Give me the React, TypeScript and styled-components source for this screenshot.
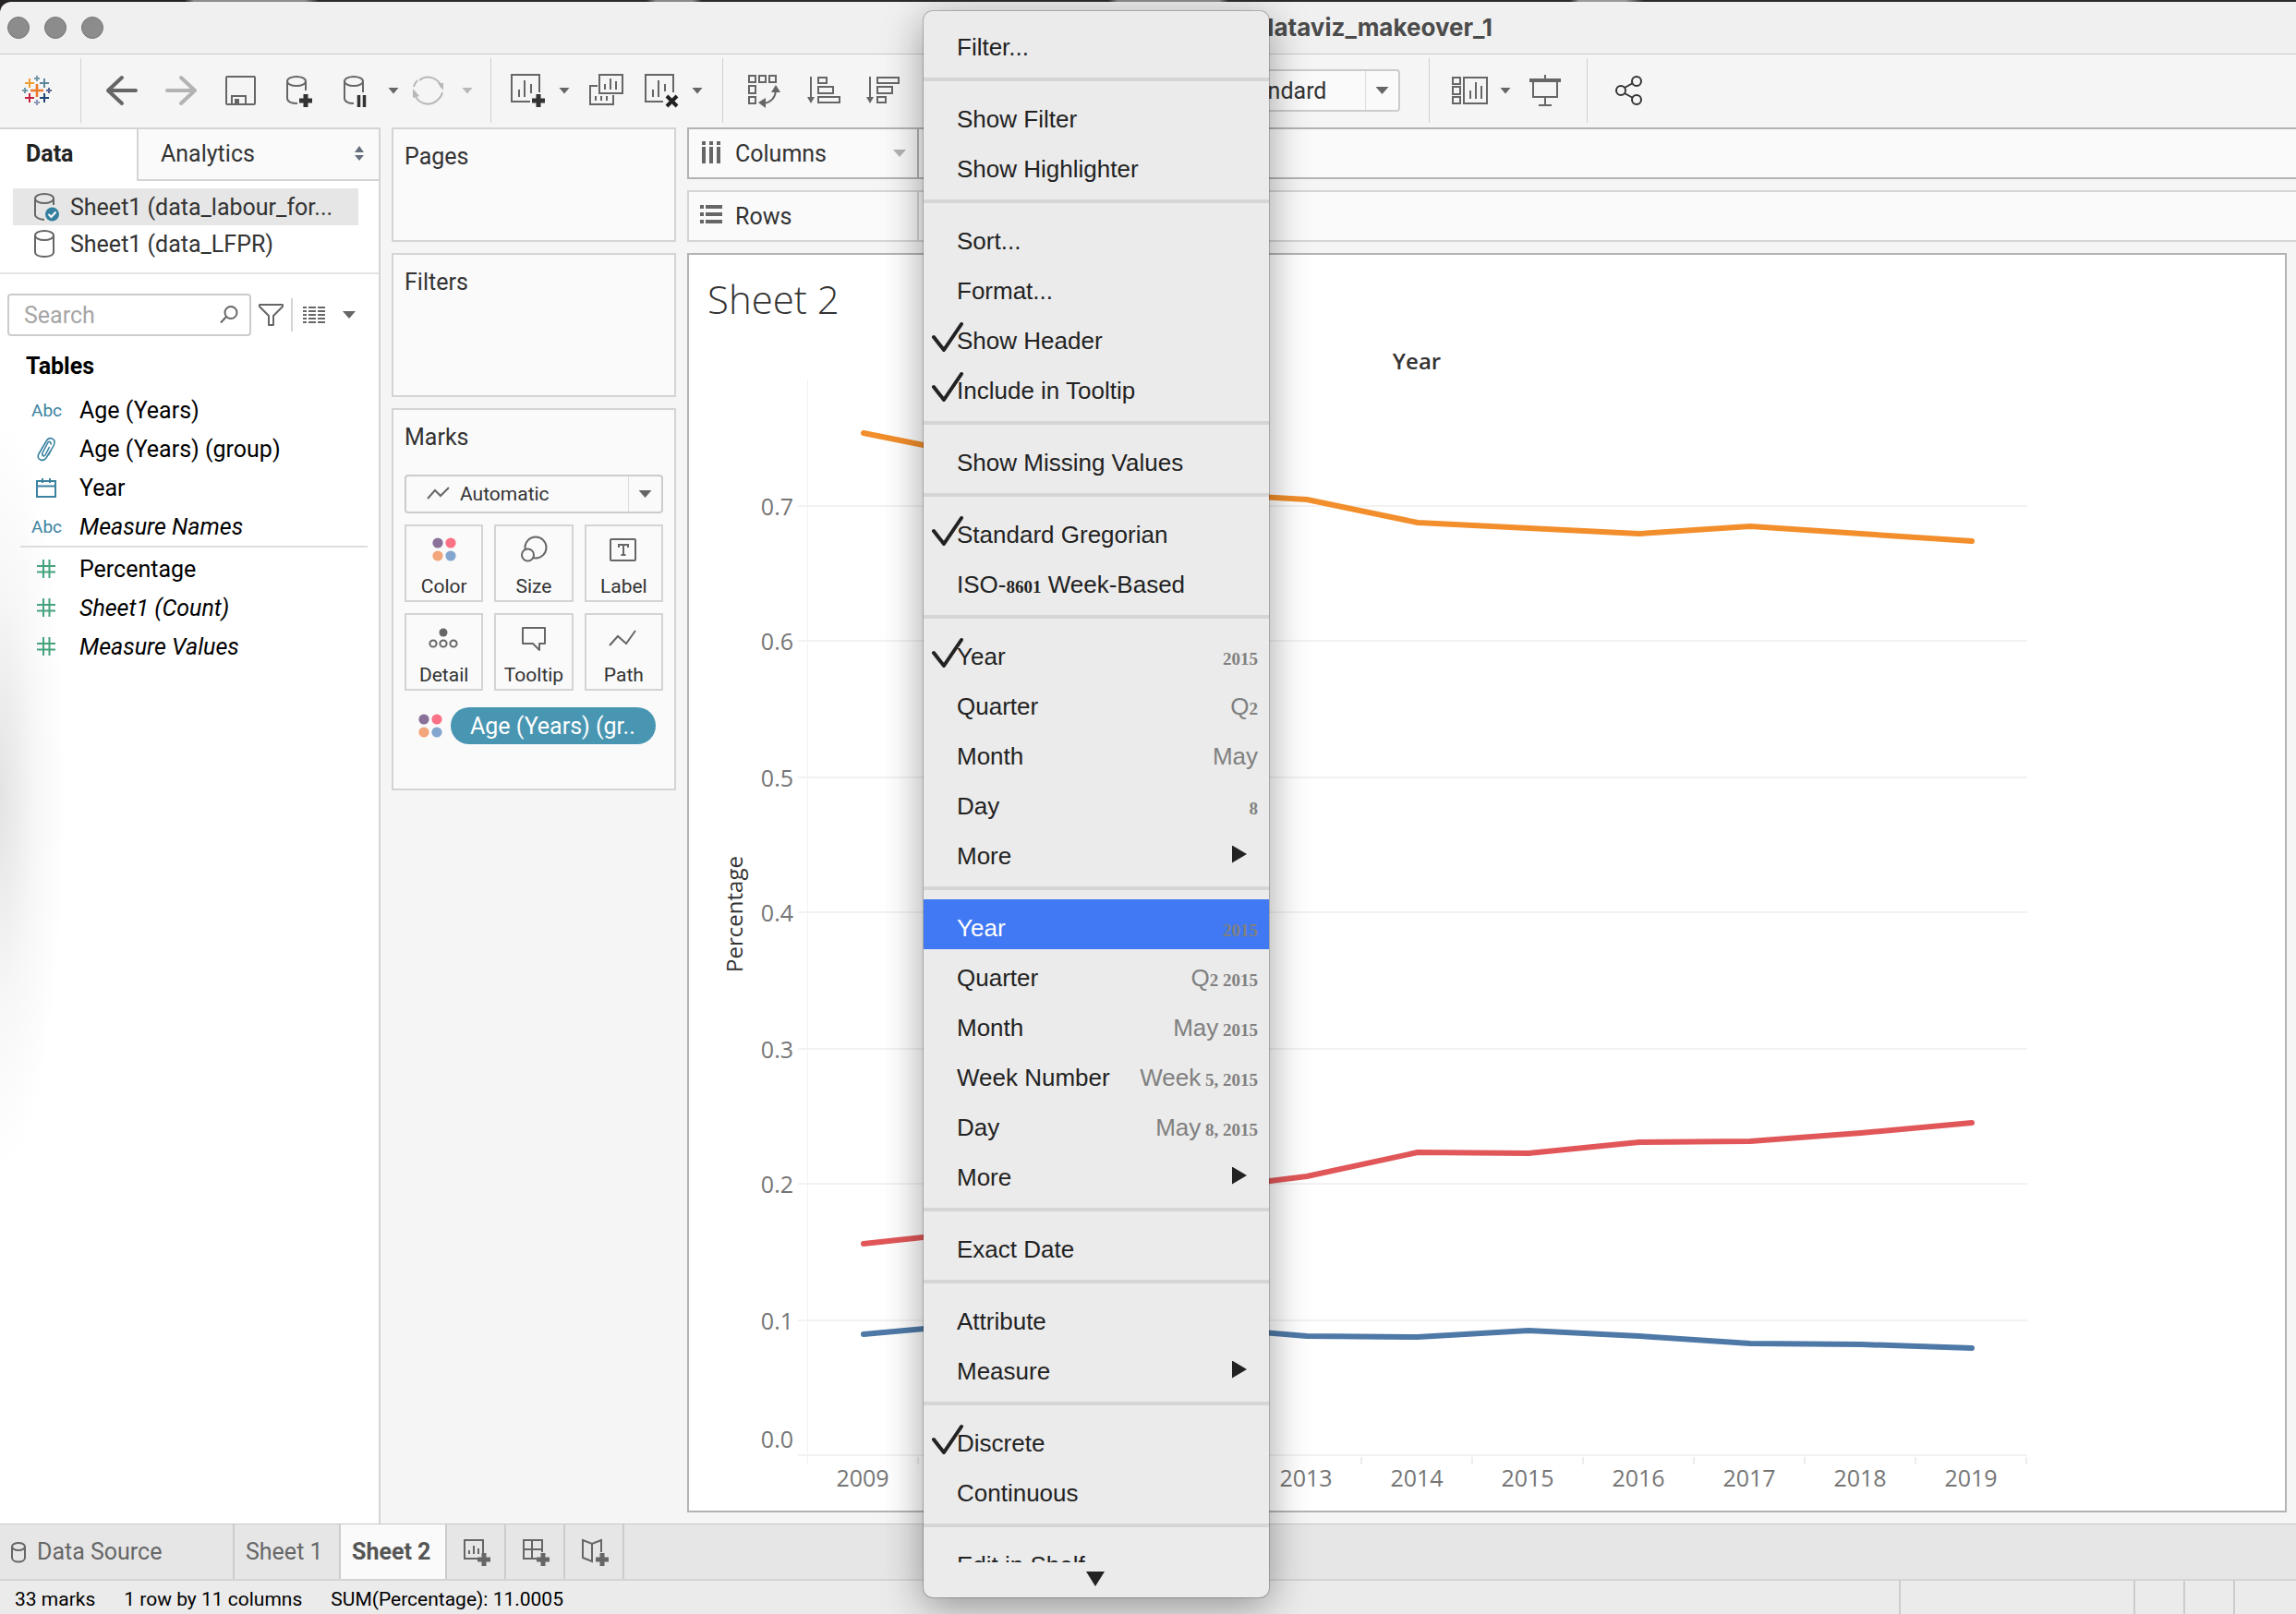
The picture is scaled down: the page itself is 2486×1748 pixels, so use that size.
import React from "react";
import styled, { createGlobalStyle, css } from "styled-components";

const UI = `Roboto, "Liberation Sans", sans-serif`;
const CHART = `"Open Sans", "Noto Sans", sans-serif`;
const MENU = `"Liberation Sans", Arial, sans-serif`;

const GlobalStyle = createGlobalStyle`
  *, *::before, *::after { box-sizing: border-box; }
  body {
    margin: 0;
    font-family: ${UI};
    font-size: 25px;
    color: #333;
    background: linear-gradient(90deg, #262424 0 200px, #8e8c8c 210px 330px, #2b2929 345px 700px, #8a8888 710px 750px, #2b2929 760px 1200px, #858383 1210px 1320px, #2b2929 1330px 1700px, #9a9898 1710px 1760px, #2b2929 1780px);
  }
  button, input, select { font: inherit; color: inherit; margin: 0; }
  button { border: 0; padding: 0; background: none; }
  ul { list-style: none; margin: 0; padding: 0; }
  h1, h2, h3 { margin: 0; font-size: inherit; }
`;

/* ---------- window frame ---------- */

const Window = styled.div`
  position: relative;
  display: flex;
  flex-direction: column;
  height: 100vh;
  border-top: 2px solid transparent;
  overflow: hidden;
`;

const TitleBar = styled.header`
  display: flex;
  justify-content: space-between;
  align-items: center;
  flex: none;
  height: 57px;
  padding: 0 35% 0 8px;
  border-top-left-radius: 12px;
  border-bottom: 1px solid #c9c9c9;
  background: #f0f0f0;
`;

const Lights = styled.div`
  display: flex;
  gap: 16px;
`;

const Light = styled.button`
  width: 24px;
  height: 24px;
  border: 1px solid #757575;
  border-radius: 50%;
  background: #8c8c8c;
`;

const WindowTitle = styled.h1`
  font-family: Inter, ${UI};
  font-size: 26px;
  font-weight: 700;
  line-height: 32px;
  color: #4b4b4b;
`;

/* ---------- toolbar ---------- */

const Toolbar = styled.nav`
  display: flex;
  align-items: center;
  flex: none;
  height: 79px;
  padding-bottom: 1px;
  background: #f5f5f5;
`;

const ToolGroup = styled.div<{ $gap?: number; $start?: number; $end?: number }>`
  display: flex;
  align-items: center;
  gap: ${(p) => p.$gap ?? 24}px;
  padding: 0 ${(p) => p.$end ?? 24}px 0 ${(p) => p.$start ?? 24}px;
`;

const Split = styled.div`
  display: flex;
  align-items: center;
  gap: 12px;
`;

const ToolButton = styled.button`
  display: block;
  width: 40px;
  height: 40px;
  svg { display: block; }
`;

const ToolRule = styled.span`
  flex: none;
  width: 1px;
  height: 70px;
  background: #d0d0d0;
`;

const HiddenTools = styled.span`
  width: 297px;
`;

const CaretButton = styled.button<{ $tone?: string }>`
  width: 12px;
  height: 7px;
  background: ${(p) => p.$tone ?? "#666"};
  clip-path: polygon(0 0, 100% 0, 50% 100%);
`;

const Caret = styled.span<{ $tone?: string }>`
  display: block;
  width: 14px;
  height: 8px;
  background: ${(p) => p.$tone ?? "#666"};
  clip-path: polygon(0 0, 100% 0, 50% 100%);
`;

const Picker = styled.label<{ $width: string; $height: number; $inset: number; $size: number }>`
  display: grid;
  grid-template-columns: 1fr 36px;
  align-items: center;
  width: ${(p) => p.$width};
  height: ${(p) => p.$height}px;
  border: 2px solid #ccc;
  border-radius: 4px;
  background: #fafafa;
  font-size: ${(p) => p.$size}px;
  > * { grid-row: 1; }
  select {
    grid-column: 1 / 3;
    width: 100%;
    height: 100%;
    padding: 0 0 0 ${(p) => p.$inset}px;
    border: 0;
    appearance: none;
    background: none;
  }
  svg { grid-column: 1; margin-left: 22px; }
`;

const PickerArrow = styled.span`
  grid-column: 2;
  display: grid;
  place-items: center;
  height: 100%;
  border-left: 1px solid #ddd;
  pointer-events: none;
`;

/* ---------- workspace ---------- */

const Workspace = styled.main`
  display: flex;
  flex: 1;
  min-height: 0;
  background: #f5f5f5;
`;

const DataPane = styled.aside`
  flex: none;
  width: 412px;
  border-top: 2px solid #d4d4d4;
  border-right: 2px solid #d4d4d4;
  background: radial-gradient(ellipse 72px 410px at 0 720px, rgba(0, 0, 0, 0.11), rgba(0, 0, 0, 0.03) 55%, transparent) #fff;
`;

const PaneTabs = styled.div`
  display: grid;
  grid-template-columns: 148px 1fr;
  height: 56px;
`;

const PaneTab = styled.button<{ $active?: boolean }>`
  display: flex;
  align-items: center;
  justify-content: space-between;
  padding: 0 15px 4px 28px;
  text-align: left;
  ${(p) =>
    p.$active
      ? css`
          font-weight: 700;
          color: #222;
        `
      : css`
          padding: 0 15px 2px 24px;
          border-left: 2px solid #d4d4d4;
          border-bottom: 2px solid #d4d4d4;
          background: #fafafa;
        `}
`;

const Sources = styled.ul`
  padding: 8px 22px 11px 14px;
  border-bottom: 2px solid #e5e5e5;
`;

const Source = styled.li<{ $selected?: boolean }>`
  background: ${(p) => (p.$selected ? "#e6e6e6" : "none")};
  button {
    display: flex;
    align-items: center;
    gap: 15px;
    width: 100%;
    height: 40px;
    padding-left: 23px;
    white-space: nowrap;
  }
`;

const SearchRow = styled.div`
  display: flex;
  align-items: center;
  padding: 21px 8px 0 8px;
`;

const SearchBox = styled.label`
  display: flex;
  align-items: center;
  width: 264px;
  height: 46px;
  padding: 0 12px 0 16px;
  border: 2px solid #ccc;
  border-radius: 4px;
  background: #fff;
  input {
    flex: 1;
    min-width: 0;
    padding: 0;
    border: 0;
    outline: 0;
    background: none;
  }
  input::placeholder { color: #a6a6a6; opacity: 1; }
`;

const SearchTools = styled.div`
  display: flex;
  align-items: center;
  gap: 8px;
  margin-left: 8px;
  button { display: block; }
  svg { display: block; }
`;

const SmallRule = styled.span`
  width: 2px;
  height: 36px;
  background: #d4d4d4;
`;

const ListView = styled.button`
  padding: 0 11px 0 3px;
`;

const FieldsTitle = styled.h2`
  padding: 17px 0 0 28px;
  line-height: 32px;
  font-weight: 700;
  color: #000;
`;

const FieldList = styled.ul`
  margin: 10px 12px 0 22px;
  color: #000;
  & + & {
    margin-top: 0;
    padding-top: 2px;
    border-top: 2px solid #ddd;
  }
`;

const Field = styled.li<{ $italic?: boolean }>`
  display: grid;
  grid-template-columns: 56px 1fr;
  align-items: center;
  height: 42px;
  padding-left: 8px;
  font-style: ${(p) => (p.$italic ? "italic" : "normal")};
  svg { margin-left: 9px; }
`;

const Abc = styled.span`
  padding-left: 4px;
  font-size: 19px;
  font-style: normal;
  color: #3b82a0;
`;

/* ---------- cards ---------- */

const Cards = styled.section`
  display: flex;
  flex-direction: column;
  flex: none;
  gap: 12px;
  width: 308px;
  margin: 0 12px;
`;

const Card = styled.section<{ $height: number }>`
  min-height: ${(p) => p.$height}px;
  padding: 14px 12px;
  border: 2px solid #d4d4d4;
  background: #fafafa;
`;

const CardTitle = styled.h2`
  font-weight: 400;
  line-height: 32px;
`;

const MarksBody = styled.div`
  display: grid;
  gap: 12px;
  padding-top: 24px;
`;

const MarkGrid = styled.div`
  display: grid;
  grid-template-columns: repeat(3, 1fr);
  gap: 12px;
`;

const MarkButton = styled.button`
  display: flex;
  flex-direction: column;
  align-items: center;
  justify-content: space-between;
  height: 84px;
  padding: 10px 0 2px;
  border: 2px solid #d4d4d4;
  font-size: 21px;
  line-height: 26px;
`;

const PillRow = styled.div`
  display: flex;
  align-items: center;
  gap: 9px;
  padding: 6px 8px 0 15px;
`;

const Pill = styled.button`
  flex: 1;
  height: 40px;
  padding: 0 21px;
  border-radius: 20px;
  background: #4996b2;
  color: #fff;
  text-align: left;
  white-space: nowrap;
`;

/* ---------- shelves and sheet ---------- */

const Canvas = styled.section`
  display: flex;
  flex-direction: column;
  flex: 1;
  gap: 12px;
  min-width: 0;
  padding-bottom: 12px;
`;

const Shelf = styled.div<{ $active?: boolean }>`
  --edge: ${(p) => (p.$active ? "#b3b3b3" : "#d4d4d4")};
  display: flex;
  flex: none;
  height: 56px;
  border: 2px solid var(--edge);
  border-right: 0;
  background: #fafafa;
`;

const ShelfName = styled.div`
  display: flex;
  align-items: center;
  gap: 14px;
  width: 249px;
  padding: 0 12px;
  border-right: 2px solid var(--edge);
  span:last-child { margin-left: auto; }
`;

const Sheet = styled.article`
  flex: 1;
  min-height: 0;
  margin-right: 10px;
  border: 2px solid #b3b3b3;
  background: #fff;
  overflow: hidden;
`;

const SheetTitle = styled.h2`
  height: 100px;
  padding: 18px 0 0 20px;
  font-family: ${CHART};
  font-size: 42px;
  font-weight: 300;
  line-height: 60px;
`;

const Chart = styled.svg`
  display: block;
  width: 1460px;
  height: 1260px;
  font-family: ${CHART};
  font-size: 25px;
`;

/* ---------- footer ---------- */

const TabBar = styled.nav`
  display: flex;
  flex: none;
  height: 62px;
  border-top: 1px solid #c8c8c8;
  border-bottom: 2px solid #d4d4d4;
  background: #e6e6e6;
`;

const SheetTab = styled.button<{ $active?: boolean; $wide?: boolean }>`
  display: flex;
  align-items: center;
  gap: 12px;
  min-width: ${(p) => (p.$wide ? 254 : 115)}px;
  padding: 0 12px;
  border-right: 2px solid #ccc;
  color: #666;
  white-space: nowrap;
  ${(p) =>
    p.$active &&
    css`
      background: #fafafa;
      color: #555;
      font-weight: 700;
    `}
`;

const NewTab = styled.button`
  display: grid;
  place-items: center;
  width: 64px;
  border-right: 2px solid #ccc;
`;

const StatusBar = styled.footer`
  display: flex;
  flex: none;
  gap: 31px;
  height: 36px;
  padding-left: 16px;
  background: #ebebeb;
  color: #000;
  font-size: 21px;
  line-height: 40px;
  white-space: nowrap;
`;

const StatusCells = styled.div`
  display: grid;
  grid-template-columns: 254px 54px 54px 68px;
  margin-left: auto;
  span { border-left: 2px solid #ccc; }
`;

/* ---------- context menu ---------- */

const Menu = styled.div`
  position: absolute;
  top: 10px;
  left: 1000px;
  display: flex;
  flex-direction: column;
  width: 374px;
  max-height: calc(100vh - 30px);
  border-radius: 10px;
  background: #ebebeb;
  box-shadow: 0 0 0 1px rgba(0, 0, 0, 0.2), 0 10px 44px rgba(0, 0, 0, 0.38);
  font-family: ${MENU};
  font-size: 26px;
  color: #222;
`;

const MenuScroll = styled.div`
  flex: 1;
  min-height: 0;
  padding-top: 8px;
  overflow: hidden;
`;

const MenuSection = styled.ul`
  & + & {
    margin-top: 10px;
    padding-top: 10px;
    border-top: 4px solid #d5d5d5;
  }
`;

const MenuButton = styled.button<{ $hot?: boolean }>`
  display: flex;
  align-items: center;
  justify-content: space-between;
  width: 100%;
  height: 54px;
  padding: 8px 12px 0 36px;
  background: ${(p) => (p.$hot ? "#4178f3" : "none")};
  color: ${(p) => (p.$hot ? "#fff" : "#222")};
  white-space: nowrap;
`;

const CheckSlot = styled.span`
  position: absolute;
  left: 8px;
  padding-bottom: 4px;
  svg { display: block; }
`;

const Hint = styled.span`
  color: #808080;
`;

const SmallDigits = styled.span`
  font-family: "Liberation Serif", "Times New Roman", serif;
  font-size: 19px;
  font-weight: 700;
`;

const SubArrow = styled.span`
  width: 16px;
  height: 19px;
  margin: 0 12px 4px 0;
  background: #222;
  clip-path: polygon(0 0, 100% 50%, 0 100%);
`;

const ScrollDown = styled.button`
  display: grid;
  flex: none;
  justify-items: center;
  align-content: start;
  height: 38px;
  padding: 10px 2px 0 0;
  span {
    width: 20px;
    height: 16px;
    background: #222;
    clip-path: polygon(0 0, 100% 0, 50% 100%);
  }
`;

/* ---------- icons ---------- */

const Icon = ({ children, w = 40, h = 40, stroke = "#666", sw = 2 }: { children: React.ReactNode; w?: number; h?: number; stroke?: string; sw?: number }) => (
  <svg width={w} height={h} viewBox={`0 0 ${w} ${h}`} fill="none" stroke={stroke} strokeWidth={sw} aria-hidden="true" overflow="visible">
    {children}
  </svg>
);

const Logo = () => (
  <Icon>
    <path d="M20 13V27M13 20H27" stroke="#ec7a2c" strokeWidth="2.6" />
    <path d="M12 7V17M7 12H17" stroke="#ee9d2f" />
    <path d="M28 7V17M23 12H33" stroke="#5b879b" />
    <path d="M12 23V33M7 28H17" stroke="#c8203f" />
    <path d="M28 23V33M23 28H33" stroke="#1f4578" />
    <path d="M20 4V10M17 7H23M7 17V23M4 20H10" stroke="#7199a6" />
    <path d="M33 17V23M30 20H36" stroke="#5c6692" />
    <path d="M20 30V36M17 33H23" stroke="#8c97b8" />
  </Icon>
);

const plus = (x: number, y: number, tone = "#333") => <path d={`M${x - 7} ${y}H${x + 7}M${x} ${y - 7}V${y + 7}`} stroke={tone} strokeWidth="5" />;

const ColorDots = ({ size = 26 }: { size?: number }) => (
  <svg width={size} height={size} viewBox="0 0 26 26" aria-hidden="true">
    <circle cx="6" cy="6" r="5.6" fill="#8a7199" />
    <circle cx="20" cy="6" r="5.6" fill="#fb7185" />
    <circle cx="6" cy="20" r="5.6" fill="#f3a67b" />
    <circle cx="20" cy="20" r="5.6" fill="#84a6ce" />
  </svg>
);

const Cylinder = ({ checked }: { checked?: boolean }) => (
  <Icon w={24} h={32}>
    <ellipse cx="11" cy="7" rx="10" ry="5" />
    {checked ? <path d="M1 7V25Q2 29 11 30M21 7V14" /> : <path d="M1 7V25C1 28 5 30 11 30S21 28 21 25V7" />}
    {checked && (
      <>
        <circle cx="19.500" cy="24" r="7.500" fill="#33809f" stroke="none" />
        <path d="M15.500 24L18.500 27L23.500 21.500" stroke="#fff" />
      </>
    )}
  </Icon>
);

const Hash = () => (
  <Icon w={22} h={22} stroke="#45a37c">
    <path d="M8 1V21M14.500 1V21M1 8H21M1 14.500H21" />
  </Icon>
);

const Clip = () => (
  <Icon w={22} h={26} stroke="#3b82a0" sw={1.6}>
    <path d="M16.500 14L11 23C7 28 0 24 3 18.500L11 5C14 -1 22 2 19.500 8.500L13.500 20M16 8.500C17 5 13.500 4.500 12.500 7L7 17.500C6 21 9 22 10.500 19L14.500 11" />
  </Icon>
);

const Calendar = () => (
  <Icon w={22} h={22} stroke="#3b82a0">
    <path d="M1 4H21V21H1ZM1 9.500H21M7 1V6M15 1V6" />
  </Icon>
);

/* ---------- data ---------- */

const YEARS = ["2009", "", "", "", "2013", "2014", "2015", "2016", "2017", "2018", "2019"];
const SERIES = [
  { color: "#f28e2b", ys: [469, 493, 518, 534, 541, 566, 572, 578, 570, 578, 586] },
  { color: "#e15759", ys: [1347, 1334, 1316, 1289, 1274, 1248, 1249, 1237, 1236, 1227, 1216] },
  { color: "#4e79a7", ys: [1445, 1434, 1432, 1437, 1447, 1448, 1441, 1447, 1455, 1456, 1460] },
];
const TICKS = [
  { label: "0.7", y: 548 },
  { label: "0.6", y: 694 },
  { label: "0.5", y: 842 },
  { label: "0.4", y: 988 },
  { label: "0.3", y: 1136 },
  { label: "0.2", y: 1282 },
  { label: "0.1", y: 1430 },
];

type Item = { label: string; check?: boolean; hint?: string; sub?: boolean; hot?: boolean };
const MENU_SECTIONS: Item[][] = [
  [{ label: "Filter..." }],
  [{ label: "Show Filter" }, { label: "Show Highlighter" }],
  [{ label: "Sort..." }, { label: "Format..." }, { label: "Show Header", check: true }, { label: "Include in Tooltip", check: true }],
  [{ label: "Show Missing Values" }],
  [{ label: "Standard Gregorian", check: true }, { label: "ISO-8601 Week-Based" }],
  [
    { label: "Year", check: true, hint: "2015" },
    { label: "Quarter", hint: "Q2" },
    { label: "Month", hint: "May" },
    { label: "Day", hint: "8" },
    { label: "More", sub: true },
  ],
  [
    { label: "Year", hint: "2015", hot: true },
    { label: "Quarter", hint: "Q2 2015" },
    { label: "Month", hint: "May 2015" },
    { label: "Week Number", hint: "Week 5, 2015" },
    { label: "Day", hint: "May 8, 2015" },
    { label: "More", sub: true },
  ],
  [{ label: "Exact Date" }],
  [{ label: "Attribute" }, { label: "Measure", sub: true }],
  [{ label: "Discrete", check: true }, { label: "Continuous" }],
  [{ label: "Edit in Shelf" }],
];

const Mixed = ({ text }: { text: string }) => (
  <span>
    {text.split(/(\s?[\d,]+(?:\s[\d,]+)*)/).map((part, i) => (/\d/.test(part) ? <SmallDigits key={i}>{part}</SmallDigits> : part))}
  </span>
);

const ContextMenu = () => (
  <Menu role="menu">
    <MenuScroll>
      {MENU_SECTIONS.map((items, s) => (
        <MenuSection key={s}>
          {items.map((item) => (
            <li key={item.label}>
              <MenuButton role="menuitem" $hot={item.hot}>
                {item.check && (
                  <CheckSlot>
                    <Icon w={36} h={40} stroke="#222" sw={4}>
                      <path d="M3 18L14 32L33 4" strokeLinecap="round" strokeLinejoin="round" />
                    </Icon>
                  </CheckSlot>
                )}
                <Mixed text={item.label} />
                {item.hint && (
                  <Hint>
                    <Mixed text={item.hint} />
                  </Hint>
                )}
                {item.sub && <SubArrow />}
              </MenuButton>
            </li>
          ))}
        </MenuSection>
      ))}
    </MenuScroll>
    <ScrollDown aria-label="Scroll down">
      <span />
    </ScrollDown>
  </Menu>
);

const LineChart = () => (
  <Chart viewBox="746 376 1460 1260" role="img" aria-label="Percentage by year">
    <text x="1534" y="400" textAnchor="middle" fontWeight="600" fontSize="24" fill="#333">Year</text>
    <text transform="translate(804 990) rotate(-90)" textAnchor="middle" fontSize="24" fill="#333">Percentage</text>
    <path d="M874.500 411V1586" stroke="#f2f2f2" />
    {TICKS.map((t) => (
      <g key={t.label}>
        <path d={`M864 ${t.y}H2195`} stroke="#f2f2f2" strokeWidth="2" />
        <text x="859" y={t.y + 10} textAnchor="end" fill="#757575">{t.label}</text>
      </g>
    ))}
    <path d="M864 1576H2195" stroke="#f2f2f2" strokeWidth="2" />
    <text x="859" y="1568" textAnchor="end" fill="#757575">0.0</text>
    {YEARS.map((year, i) => (
      <g key={i}>
        <path d={`M${994 + i * 120} 1578V1586`} stroke="#ededed" strokeWidth="2" />
        {year && <text x={934 + i * 120} y="1610" textAnchor="middle" fill="#757575">{year}</text>}
      </g>
    ))}
    {SERIES.map((s) => (
      <polyline
        key={s.color}
        points={s.ys.map((y, i) => `${935 + i * 120},${y}`).join(" ")}
        fill="none"
        stroke={s.color}
        strokeWidth="6"
        strokeLinecap="round"
        strokeLinejoin="round"
      />
    ))}
  </Chart>
);

const MainToolbar = () => (
  <Toolbar>
    <ToolGroup $start={20} $end={27}>
      <ToolButton aria-label="Start page"><Logo /></ToolButton>
    </ToolGroup>
    <ToolRule />
    <ToolGroup $end={19}>
      <ToolButton aria-label="Undo">
        <Icon sw={4}><path d="M20 6L5 20L20 34M5 20H35" strokeLinecap="round" strokeLinejoin="round" /></Icon>
      </ToolButton>
      <ToolButton aria-label="Redo">
        <Icon stroke="#b3b3b3" sw={4}><path d="M20 6L35 20L20 34M5 20H35" strokeLinecap="round" strokeLinejoin="round" /></Icon>
      </ToolButton>
      <ToolButton aria-label="Save">
        <Icon><rect x="5" y="5" width="31" height="30" rx="1" /><path d="M11 35V26H26V35" /><path d="M14 29H19V35H14Z" fill="#666" stroke="none" /></Icon>
      </ToolButton>
      <ToolButton aria-label="New data source">
        <Icon><ellipse cx="17" cy="10" rx="10" ry="5" /><path d="M7 10V29Q8 34 18 34M27 10V20" />{plus(27, 31)}</Icon>
      </ToolButton>
      <ToolGroup $gap={16} $start={0} $end={0}>
        <Split>
          <ToolButton aria-label="Pause updates">
            <Icon><ellipse cx="15" cy="10" rx="10" ry="5" /><path d="M5 10V29Q6 34 15 34M25 10V22" /><path d="M20.500 25V38M26.500 25V38" stroke="#333" strokeWidth="3.500" /></Icon>
          </ToolButton>
          <CaretButton aria-label="Update options" />
        </Split>
        <Split>
          <ToolButton aria-label="Refresh">
            <Icon stroke="#b8b8b8">
              <path d="M6 9A15 15 0 0 1 30 17M0 16Q1 12 4 9M1 24A15 15 0 0 0 25 31M25 31Q30 27 31 22" />
              <path d="M26 12L32 12L32 20ZM-1 18L6 26L-1 28Z" fill="#b8b8b8" stroke="none" />
            </Icon>
          </ToolButton>
          <CaretButton $tone="#b8b8b8" aria-label="Refresh options" />
        </Split>
      </ToolGroup>
    </ToolGroup>
    <ToolRule />
    <ToolGroup $gap={20} $start={21} $end={21}>
      <Split>
        <ToolButton aria-label="New worksheet">
          <Icon><path d="M21 32H1V3H31V22M9 19V27M15 9V27M22 13V23" />{plus(30, 31)}</Icon>
        </ToolButton>
        <CaretButton aria-label="New worksheet options" />
      </Split>
      <ToolButton aria-label="Duplicate">
        <Icon><path d="M12 3H37V23H12ZM18 13V19M24 7V19M30 10V19M10 15H2V35H27V25M8 26V31M14 26V31M20 26V31" /></Icon>
      </ToolButton>
      <Split>
        <ToolButton aria-label="Clear sheet">
          <Icon><path d="M21 32H2V3H32V22M10 19V27M16 9V27M23 13V21" /><path d="M25 26L36 37M36 26L25 37" stroke="#222" strokeWidth="4" /></Icon>
        </ToolButton>
        <CaretButton aria-label="Clear options" />
      </Split>
    </ToolGroup>
    <ToolRule />
    <ToolGroup $end={31}>
      <ToolButton aria-label="Swap rows and columns">
        <Icon>
          <path d="M4 4H11V11H4ZM15 4H22V11H15ZM26 4H33V11H26ZM4 15H11V23H4ZM4 27H11V34H4ZM33 20Q32 32 20 34" />
          <path d="M28 22L33 14L38 22ZM22 28L14 33L22 39Z" fill="#666" stroke="none" />
        </Icon>
      </ToolButton>
      <ToolButton aria-label="Sort ascending">
        <Icon><path d="M7 5V30M15 6H24V12H15ZM15 16H31V23H15ZM15 27H38V33H15Z" /><path d="M3 27H11L7 34Z" fill="#666" stroke="none" /></Icon>
      </ToolButton>
      <ToolButton aria-label="Sort descending">
        <Icon><path d="M7 5V30M15 6H38V12H15ZM15 16H31V23H15ZM15 27H24V33H15Z" /><path d="M3 27H11L7 34Z" fill="#666" stroke="none" /></Icon>
      </ToolButton>
      <HiddenTools />
      <Picker $width="196px" $height={46} $inset={14} $size={25}>
        <select aria-label="Fit" defaultValue="Standard"><option>Standard</option></select>
        <PickerArrow><Caret /></PickerArrow>
      </Picker>
    </ToolGroup>
    <ToolRule />
    <ToolGroup $gap={18}>
      <Split>
        <ToolButton aria-label="Show me cards">
          <Icon><path d="M1 6H9V13H1ZM1 16H9V24H1ZM1 27H9V34H1ZM13 6H38V34H13ZM20 20V29M26 11V29M32 15V29" /></Icon>
        </ToolButton>
        <CaretButton aria-label="Card options" />
      </Split>
      <ToolButton aria-label="Presentation mode">
        <Icon><path d="M6 10V27H32V10M19 3V8M19 27V36M12 36H26" /><path d="M2 9H36" strokeWidth="4" /></Icon>
      </ToolButton>
    </ToolGroup>
    <ToolRule />
    <ToolGroup>
      <ToolButton aria-label="Share">
        <Icon stroke="#333"><circle cx="29" cy="10" r="5" /><circle cx="12" cy="20" r="5" /><circle cx="29" cy="30" r="5" /><path d="M16 17L25 12M16 23L25 28" /></Icon>
      </ToolButton>
    </ToolGroup>
  </Toolbar>
);

const DataSidebar = () => (
  <DataPane>
    <PaneTabs>
      <PaneTab $active>Data</PaneTab>
      <PaneTab>
        Analytics
        <Icon w={12} h={18} stroke="none"><path d="M1 8L6 1L11 8ZM1 11H11L6 17Z" fill="#66707f" /></Icon>
      </PaneTab>
    </PaneTabs>
    <Sources>
      <Source $selected><button><Cylinder checked />Sheet1 (data_labour_for...</button></Source>
      <Source><button><Cylinder />Sheet1 (data_LFPR)</button></Source>
    </Sources>
    <SearchRow>
      <SearchBox>
        <input placeholder="Search" aria-label="Search" />
        <Icon w={20} h={20}><circle cx="12" cy="7.500" r="6.500" /><path d="M7 12L1 18.500" /></Icon>
      </SearchBox>
      <SearchTools>
        <button aria-label="Filter fields">
          <Icon w={27} h={26}><path d="M1 2H26V4L16 14V24H11V14L1 4Z" strokeLinejoin="round" /></Icon>
        </button>
        <SmallRule />
        <ListView aria-label="View as list">
          <Icon w={24} h={20}><path d="M0 2H24M0 6H24M0 10H24M0 14H24M0 18H24" strokeDasharray="4 2 8 2 8" /></Icon>
        </ListView>
        <button aria-label="List options"><Caret /></button>
      </SearchTools>
    </SearchRow>
    <FieldsTitle>Tables</FieldsTitle>
    <FieldList>
      <Field><Abc>Abc</Abc>Age (Years)</Field>
      <Field><Clip />Age (Years) (group)</Field>
      <Field><Calendar />Year</Field>
      <Field $italic><Abc>Abc</Abc>Measure Names</Field>
    </FieldList>
    <FieldList>
      <Field><Hash />Percentage</Field>
      <Field $italic><Hash />Sheet1 (Count)</Field>
      <Field $italic><Hash />Measure Values</Field>
    </FieldList>
  </DataPane>
);

const MARKS: { label: string; icon: React.ReactNode }[] = [
  { label: "Color", icon: <Icon w={26} h={30} stroke="none"><g transform="translate(0 2)"><ColorDots /></g></Icon> },
  { label: "Size", icon: <Icon w={30} h={30}><circle cx="17" cy="13" r="11.500" /><circle cx="8.500" cy="21" r="6.500" fill="#fafafa" /></Icon> },
  { label: "Label", icon: <Icon w={30} h={30}><rect x="1" y="4" width="27" height="23" rx="1" /><path d="M10 13V10H20V13M15 10V21M12.500 21H17.500" /></Icon> },
  { label: "Detail", icon: <Icon w={32} h={30}><circle cx="15" cy="9" r="4.500" fill="#666" stroke="none" /><circle cx="4" cy="21" r="3.600" /><circle cx="15" cy="21" r="3.600" /><circle cx="26" cy="21" r="3.600" /></Icon> },
  { label: "Tooltip", icon: <Icon w={30} h={30}><path d="M3 4H27V21H21V28L14 21H3Z" strokeLinejoin="round" /></Icon> },
  { label: "Path", icon: <Icon w={30} h={30}><path d="M0 23L9 13L18 21L28 7" /></Icon> },
];

const MarkCards = () => (
  <Cards>
    <Card $height={124}><CardTitle>Pages</CardTitle></Card>
    <Card $height={156}><CardTitle>Filters</CardTitle></Card>
    <Card $height={414}>
      <CardTitle>Marks</CardTitle>
      <MarksBody>
        <Picker $width="100%" $height={42} $inset={58} $size={21}>
          <Icon w={26} h={16}><path d="M1 13L9 4L15 10L24 1" /></Icon>
          <select aria-label="Mark type" defaultValue="Automatic"><option>Automatic</option></select>
          <PickerArrow><Caret /></PickerArrow>
        </Picker>
        <MarkGrid>
          {MARKS.map((m) => (
            <MarkButton key={m.label}>{m.icon}{m.label}</MarkButton>
          ))}
        </MarkGrid>
        <PillRow>
          <ColorDots />
          <Pill>Age (Years) (gr..</Pill>
        </PillRow>
      </MarksBody>
    </Card>
  </Cards>
);

export default function App() {
  return (
    <>
      <GlobalStyle />
      <Window>
        <TitleBar>
          <Lights>
            <Light aria-label="Close" />
            <Light aria-label="Minimize" />
            <Light aria-label="Zoom" />
          </Lights>
          <WindowTitle>dataviz_makeover_1</WindowTitle>
        </TitleBar>
        <MainToolbar />
        <Workspace>
          <DataSidebar />
          <MarkCards />
          <Canvas>
            <Shelf $active>
              <ShelfName>
                <Icon w={24} h={26} stroke="none">
                  <path d="M2 0h4v4h-4zM10 0h4v4h-4zM18 0h4v4h-4zM2 6h4v18h-4zM10 6h4v18h-4zM18 6h4v18h-4z" fill="#666" />
                </Icon>
                Columns
                <Caret $tone="#b3b3b3" />
              </ShelfName>
            </Shelf>
            <Shelf>
              <ShelfName>
                <Icon w={24} h={24} stroke="none">
                  <path d="M0 0h4v4h-4zM0 8h4v4h-4zM0 16h4v4h-4zM6 0h18v4h-18zM6 8h18v4h-18zM6 16h18v4h-18z" fill="#666" />
                </Icon>
                Rows
              </ShelfName>
            </Shelf>
            <Sheet>
              <SheetTitle>Sheet 2</SheetTitle>
              <LineChart />
            </Sheet>
          </Canvas>
        </Workspace>
        <TabBar>
          <SheetTab $wide>
            <Icon w={16} h={24}><ellipse cx="8" cy="6" rx="7" ry="4" /><path d="M1 6V18C1 24 15 24 15 18V6" /></Icon>
            Data Source
          </SheetTab>
          <SheetTab>Sheet 1</SheetTab>
          <SheetTab $active>Sheet 2</SheetTab>
          <NewTab aria-label="New worksheet">
            <Icon w={30} h={30}><path d="M17 22H3V2H23V16M8 13V17M13 8V17M18 11V17" />{plus(24, 23, "#666")}</Icon>
          </NewTab>
          <NewTab aria-label="New dashboard">
            <Icon w={30} h={30}><path d="M17 22H3V2H23V15M3 12H23M12 2V22" />{plus(24, 23, "#666")}</Icon>
          </NewTab>
          <NewTab aria-label="New story">
            <Icon w={30} h={30}><path d="M23 15V2L13 6L3 2V21L13 25V6" />{plus(24, 23, "#666")}</Icon>
          </NewTab>
        </TabBar>
        <StatusBar>
          <span>33 marks</span>
          <span>1 row by 11 columns</span>
          <span>SUM(Percentage): 11.0005</span>
          <StatusCells><span /><span /><span /><span /></StatusCells>
        </StatusBar>
        <ContextMenu />
      </Window>
    </>
  );
}
